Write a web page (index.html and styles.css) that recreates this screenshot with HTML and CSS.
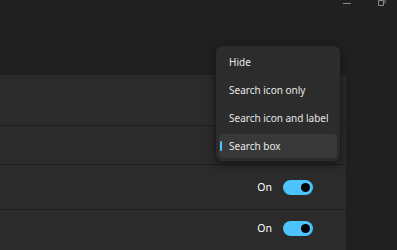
FILE: index.html
```html
<!DOCTYPE html>
<html lang="en">
<head>
  <meta charset="UTF-8">
  <title>Taskbar search</title>
  <meta name="viewport" content="width=device-width, initial-scale=1.0">
  <link rel="stylesheet" href="styles.css">
</head>
<body>

<header class="titlebar">
  <div class="caption-btns">
    <svg class="cap-min" width="10" height="4" viewBox="0 0 10 4"><path d="M1 2.5H9" stroke="#8a8a8a" stroke-width="1"/></svg>
    <svg class="cap-max" width="10" height="8" viewBox="0 0 10 8"><path d="M2.5 1.5h5v5h-5z M4 -0.5h5v5" fill="none" stroke="#8a8a8a" stroke-width="1"/></svg>
  </div>
</header>

<main class="content">
  <section class="panel">
    <div class="row row-head"></div>
    <div class="row row-mid"></div>
    <div class="row row-toggle">
      <span class="state">On</span>
      <span class="toggle"><span class="knob"></span></span>
    </div>
    <div class="row row-toggle row-last">
      <span class="state">On</span>
      <span class="toggle"><span class="knob"></span></span>
    </div>
  </section>
  <div class="gutter"></div>
</main>

<!-- выпадающее меню поверх списка -->
<ul class="menu">
  <li class="menu-item">Hide</li>
  <li class="menu-item">Search icon only</li>
  <li class="menu-item">Search icon and label</li>
  <li class="menu-item selected">Search box</li>
</ul>

</body>
</html>
```

FILE: styles.css
```css
html, body {
  margin: 0; padding: 0;
  width: 100%; height: 100%;
  background: #202020;
  color: #ffffff;
  overflow: hidden;
}
body {
  font-family: 'Noto Sans', 'Open Sans', Arial, sans-serif;
  font-size: 10px;
  position: relative;
}

/* Заголовок окна */
.titlebar {
  height: 75px;
  display: flex;
  justify-content: flex-end;
  align-items: flex-start;
}
.caption-btns {
  display: flex;
  align-items: flex-start;
  gap: 24px;
  margin-right: 11px;
}
.cap-min { margin-top: 1px; }
.cap-max { margin-top: -1px; }

/* Основная панель */
.content {
  display: flex;
  height: 175px;
}
.panel {
  width: 346px;
  background: #2b2b2b;
  display: flex;
  flex-direction: column;
}
.gutter { flex: 1; }
.row {
  border-bottom: 1px solid #1f1f1f;
  display: flex;
  align-items: center;
  justify-content: flex-end;
  padding-right: 33px;
}
.row-head { height: 50px; }
.row-mid { height: 38px; }
.row-toggle { height: 44px; }
.row-last { flex: 1; border-bottom: none; padding-bottom: 4px; }

.state {
  font-size: 10.5px;
  color: #ffffff;
  margin-right: 11px;
}
.toggle {
  width: 30px;
  height: 15px;
  border-radius: 8px;
  background: #4cc2ff;
  display: flex;
  align-items: center;
  justify-content: flex-end;
  padding-right: 3px;
  box-sizing: border-box;
}
.knob {
  width: 9px;
  height: 9px;
  border-radius: 50%;
  background: #000000;
}

/* Меню */
.menu {
  position: absolute;
  left: 215px;
  top: 45px;
  width: 126px;
  margin: 0;
  padding: 3px 3px;
  box-sizing: border-box;
  list-style: none;
  background: #2c2c2c;
  border: 1px solid #1c1c1c;
  border-radius: 7px;
  box-shadow: 0 3px 10px rgba(0,0,0,0.45);
}
.menu-item {
  position: relative;
  height: 24px;
  line-height: 24px;
  margin-top: 4px;
  padding-left: 10px;
  font-size: 10px;
  color: #e8e8e8;
  border-radius: 4px;
  white-space: nowrap;
}
.menu-item:first-child { margin-top: 1px; }
.menu-item.selected { background: #383838; }
.menu-item.selected::before {
  content: "";
  position: absolute;
  left: 1px;
  top: 7px;
  width: 2px;
  height: 10px;
  border-radius: 1px;
  background: #4cc2ff;
}
```
